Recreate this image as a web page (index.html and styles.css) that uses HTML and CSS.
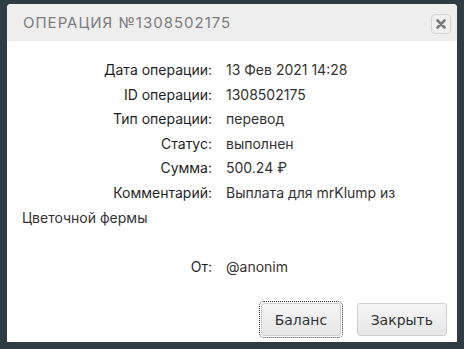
FILE: index.html
```html
<!DOCTYPE html>
<html lang="ru">
<head>
    <meta charset="UTF-8">
    <meta name="viewport" content="width=device-width, initial-scale=1.0">
    <title>Операция</title>
    <link rel="stylesheet" href="styles.css">
</head>
<body>
    <div class="dialog">
        <div class="dialog-title">
            <span class="title-text">Операция №1308502175</span>
            <button class="close-btn" title="Закрыть">
                <svg width="10" height="10" viewBox="0 0 10 10">
                    <path d="M1.5 1.5 L8.5 8.5 M8.5 1.5 L1.5 8.5" stroke="#7b7b7b" stroke-width="2.6" stroke-linecap="round"/>
                </svg>
            </button>
        </div>

        <div class="dialog-body">
            <div class="info">
                <span class="label">Дата операции:</span>13 Фев 2021 14:28<br>
                <span class="label">ID операции:</span>1308502175<br>
                <span class="label">Тип операции:</span>перевод<br>
                <span class="label">Статус:</span>выполнен<br>
                <span class="label">Сумма:</span>500.24 ₽<br>
                <span class="label">Комментарий:</span>Выплата для mrKlump из Цветочной фермы<br>
                <br>
                <span class="label">От:</span>@anonim
            </div>
        </div>

        <div class="dialog-buttons">
            <button class="btn focused">Баланс</button>
            <button class="btn">Закрыть</button>
        </div>
    </div>
</body>
</html>
```

FILE: styles.css
```css
* {
    margin: 0;
    padding: 0;
    box-sizing: border-box;
}
body {
    background: #2f3c44;
    padding: 4px 7px 7px 7px;
    font-family: Inter, "Noto Sans", sans-serif;
}
.dialog {
    width: 450px;
    height: 338px;
    background: #fff;
    border-radius: 4px 4px 0 0;
    display: flex;
    flex-direction: column;
    overflow: hidden;
}
.dialog-title {
    height: 37px;
    background: #eeeeee;
    display: flex;
    align-items: center;
    justify-content: space-between;
    padding: 0 6px 0 16px;
}
.title-text {
    font-size: 15px;
    letter-spacing: 1px;
    color: #7d7d7d;
    text-transform: uppercase;
}
.close-btn {
    width: 20px;
    height: 20px;
    margin-top: 3px;
    border: 1px solid #d3d3d3;
    border-radius: 4px;
    background: #efefef;
    display: flex;
    align-items: center;
    justify-content: center;
}
.dialog-body {
    flex: 1;
    padding: 17px 15px 0 15px;
}
.info {
    font-size: 14px;
    line-height: 24.6px;
    color: #333;
}
.label {
    display: inline-block;
    width: 190px;
    margin-right: 14px;
    text-align: right;
    color: #1f1f1f;
}
.dialog-buttons {
    display: flex;
    justify-content: flex-end;
    gap: 16px;
    padding: 0 10px 6px 0;
}
.btn {
    height: 33px;
    padding: 0 13px;
    font-family: "DejaVu Sans", sans-serif;
    font-size: 14px;
    color: #333;
    background: linear-gradient(180deg, #f6f6f6, #e6e6e6);
    border: 1px solid #cfcfcf;
    border-radius: 3px;
}
.btn.focused {
    width: 80px;
    outline: 1px dotted #333;
    outline-offset: 1px;
}
```
